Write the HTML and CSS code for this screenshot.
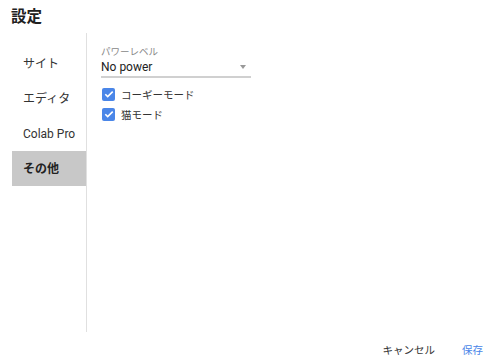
FILE: index.html
```html
<!DOCTYPE html>
<html lang="ja">
<head>
    <meta charset="UTF-8">
    <title>設定</title>
    <link rel="stylesheet" href="styles.css">
</head>
<body>
    <div class="dialog">
        <h2 class="title">設定</h2>
        <div class="main">
            <ul class="nav">
                <li>サイト</li>
                <li>エディタ</li>
                <li>Colab Pro</li>
                <li class="active">その他</li>
            </ul>
            <div class="content">
                <div class="field">
                    <div class="label">パワーレベル</div>
                    <div class="select">
                        <span>No power</span>
                        <span class="arrow"></span>
                    </div>
                </div>
                <label class="check">
                    <span class="box"><svg viewBox="0 0 12 12" width="12" height="12"><path d="M2.3 6.2l2.4 2.4 5-5" fill="none" stroke="#fff" stroke-width="1.6"/></svg></span>
                    コーギーモード
                </label>
                <label class="check">
                    <span class="box"><svg viewBox="0 0 12 12" width="12" height="12"><path d="M2.3 6.2l2.4 2.4 5-5" fill="none" stroke="#fff" stroke-width="1.6"/></svg></span>
                    猫モード
                </label>
            </div>
        </div>
        <div class="footer">
            <button class="btn">キャンセル</button>
            <button class="btn primary">保存</button>
        </div>
    </div>
</body>
</html>
```

FILE: styles.css
```css
html, body {
    margin: 0;
    height: 100%;
    background: #fff;
    font-family: Roboto, "Noto Sans CJK JP", sans-serif;
    color: #212121;
    overflow: hidden;
}
.dialog {
    height: 364px;
    display: flex;
    flex-direction: column;
    padding: 0 0 0 12px;
    box-sizing: border-box;
}
.title {
    margin: 0 0 0 -1px;
    padding-top: 6px;
    font-size: 15.5px;
    font-weight: bold;
    line-height: 22px;
    height: 27px;
}
.main {
    display: flex;
    height: 299px;
}
.nav {
    list-style: none;
    margin: 0;
    padding: 13px 0 0 0;
    width: 74px;
    border-right: 1px solid #e0e0e0;
}
.nav li {
    height: 35px;
    line-height: 36px;
    padding-left: 11px;
    font-size: 12px;
    color: #333;
}
.nav li.active {
    background: #c8c8c8;
    font-weight: bold;
    color: #222;
}
.content {
    padding: 13px 0 0 14px;
}
.field {
    width: 150px;
}
.label {
    font-size: 9.5px;
    color: #888;
    line-height: 12px;
}
.select {
    display: flex;
    justify-content: space-between;
    align-items: center;
    height: 18px;
    font-size: 12px;
    color: #222;
    border-bottom: 2px solid #d0d0d0;
}
.arrow {
    width: 0;
    height: 0;
    border-left: 3.5px solid transparent;
    border-right: 3.5px solid transparent;
    border-top: 4px solid #999;
    margin-right: 5px;
}
.check {
    display: flex;
    align-items: center;
    gap: 6px;
    height: 20px;
    font-size: 10.5px;
    color: #333;
}
.check:first-of-type {
    margin-top: 6px;
}
.box {
    width: 13px;
    height: 13px;
    border-radius: 2px;
    background: #4a86e8;
    display: flex;
    align-items: center;
    justify-content: center;
    margin-left: 1px;
}
.footer {
    display: flex;
    justify-content: flex-end;
    align-items: flex-start;
    gap: 27px;
    padding: 11px 17px 0 0;
}
.btn {
    background: none;
    border: none;
    font-family: inherit;
    font-size: 10.5px;
    line-height: 16px;
    color: #333;
    padding: 0;
}
.btn.primary {
    color: #4a86e8;
}
```
